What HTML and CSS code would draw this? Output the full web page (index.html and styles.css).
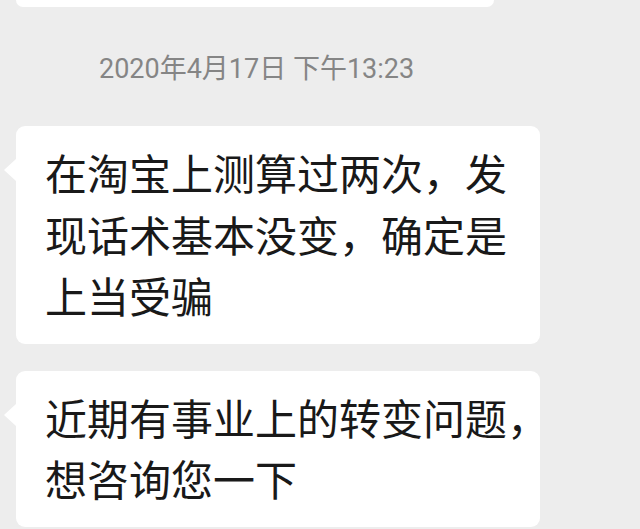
FILE: index.html
```html
<!DOCTYPE html>
<html lang="zh-CN">
<head>
<meta charset="utf-8">
<title>聊天记录</title>
<link rel="stylesheet" href="styles.css">
</head>
<body>
<div class="chat">
  <div class="prev-bubble"></div>
  <div class="time">2020年4月17日 下午13:23</div>
  <div class="bubble bubble-first">在淘宝上测算过两次，发<br>现话术基本没变，确定是<br>上当受骗</div>
  <div class="bubble">近期有事业上的转变问题，<br>想咨询您一下</div>
</div>
</body>
</html>
```

FILE: styles.css
```css
html, body {
  margin: 0;
  padding: 0;
}
body {
  background: #ededed;
  width: 640px;
  height: 529px;
  overflow: hidden;
  font-family: "Noto Sans CJK SC", "Noto Sans", sans-serif;
}
.chat {
  display: flex;
  flex-direction: column;
  align-items: flex-start;
}
.prev-bubble {
  margin-left: 16px;
  width: 478px;
  height: 7px;
  background: #ffffff;
  border-radius: 0 0 7px 7px;
}
.time {
  margin: 42px 0 0 99px;
  font-family: Roboto, "Noto Sans CJK SC", sans-serif;
  font-size: 27px;
  line-height: 40px;
  color: #858585;
  white-space: nowrap;
}
.bubble {
  position: relative;
  margin-left: 16px;
  width: 467px;
  padding: 15px 28px 18px 29px;
  background: #ffffff;
  border-radius: 9px;
  font-size: 42px;
  line-height: 61.5px;
  color: #191919;
  white-space: nowrap;
}
.bubble-first {
  margin-top: 37px;
  margin-bottom: 27px;
}
.bubble::before {
  content: "";
  position: absolute;
  left: -12px;
  top: 33px;
  width: 0;
  height: 0;
  border-top: 11px solid transparent;
  border-bottom: 11px solid transparent;
  border-right: 12px solid #ffffff;
}
```
